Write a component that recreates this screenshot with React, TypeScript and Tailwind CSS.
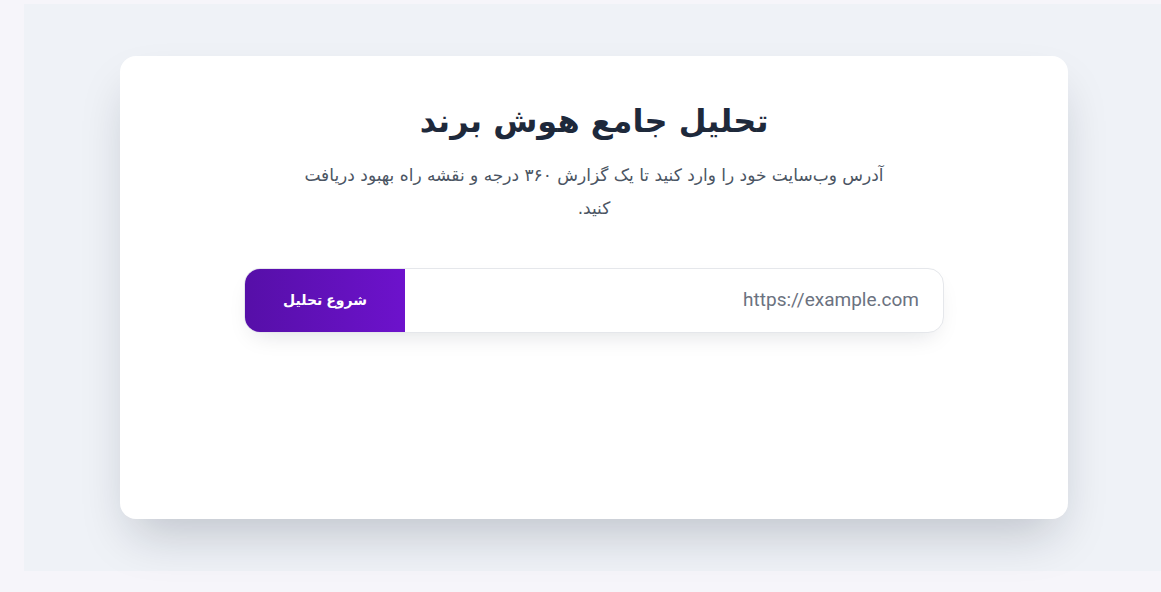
export default function App() {
  return (
    <div
      dir="rtl"
      className="min-h-[592px] bg-[#f6f5fa] pt-1 pb-[21px] pl-6"
      style={{ fontFamily: '"DejaVu Sans", sans-serif' }}
    >
      <div dir="ltr" className="h-[567px] bg-[#eff2f7] pt-[52px]">
        <div
          dir="rtl"
          className="ml-[96px] flex h-[463px] w-[948px] flex-col items-center rounded-2xl bg-white pt-[39px] shadow-[0_25px_50px_-12px_rgba(15,23,42,0.22)]"
        >
          <h1 className="text-[32px] font-bold leading-[52px] text-[#1e293b]">
            تحلیل جامع هوش برند
          </h1>
          <p className="mt-[12px] w-[600px] text-center text-[17px] leading-[33px] text-[#4b5563]">
            آدرس وب‌سایت خود را وارد کنید تا یک گزارش ۳۶۰ درجه و نقشه راه بهبود دریافت کنید.
          </p>
          <div className="mt-[43px] flex h-[65px] w-[700px] overflow-hidden rounded-2xl border border-[#e5e7eb] bg-white shadow-[0_10px_25px_-10px_rgba(15,23,42,0.15)]">
            <input
              dir="ltr"
              placeholder="https://example.com"
              className="flex-1 bg-transparent px-6 text-right text-[19px] text-[#374151] outline-none placeholder:text-[#6b7280]"
              style={{ fontFamily: 'Roboto, sans-serif' }}
            />
            <button
              className="w-[160px] bg-gradient-to-l from-[#6d12cc] to-[#560fa8] text-[14px] font-bold text-white"
              style={{ fontFamily: '"Liberation Sans", "DejaVu Sans", sans-serif' }}
            >
              شروع تحلیل
            </button>
          </div>
        </div>
      </div>
    </div>
  );
}
